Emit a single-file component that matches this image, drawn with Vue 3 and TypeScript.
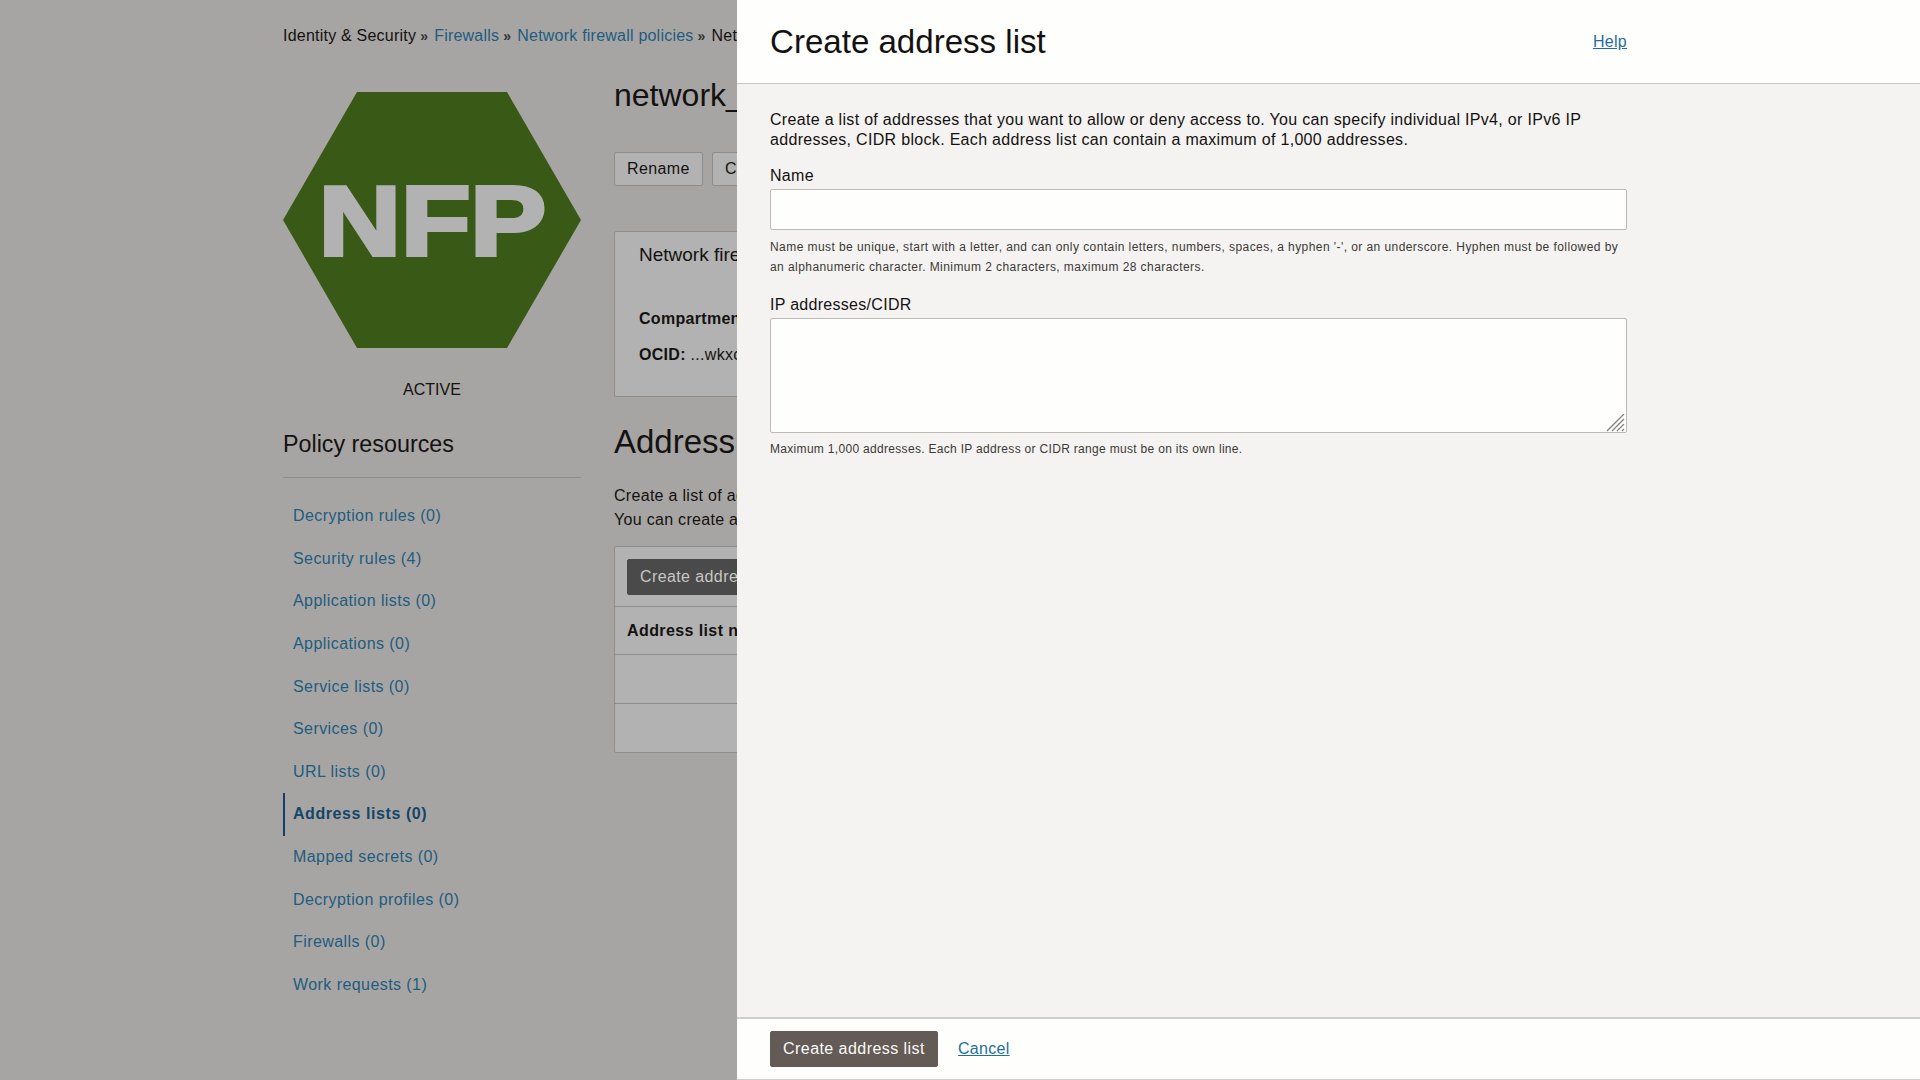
<script setup lang="ts">
const resources: { label: string; active?: boolean }[] = [
  { label: 'Decryption rules (0)' },
  { label: 'Security rules (4)' },
  { label: 'Application lists (0)' },
  { label: 'Applications (0)' },
  { label: 'Service lists (0)' },
  { label: 'Services (0)' },
  { label: 'URL lists (0)' },
  { label: 'Address lists (0)', active: true },
  { label: 'Mapped secrets (0)' },
  { label: 'Decryption profiles (0)' },
  { label: 'Firewalls (0)' },
  { label: 'Work requests (1)' },
]
</script>

<template>
  <div class="page">
    <div class="backdrop">
      <nav class="crumbs">
        <span>Identity &amp; Security</span><i class="sep">»</i>
        <a>Firewalls</a><i class="sep">»</i>
        <a>Network firewall policies</a><i class="sep">»</i>
        <span>Network firewall policy details</span>
      </nav>
      <div class="columns">
        <aside class="side">
          <svg class="hex" width="298" height="256" viewBox="0 0 298 256">
            <polygon points="0,128 74,0 224,0 298,128 224,256 74,256" fill="#395a16" />
            <text transform="translate(149.5 162.5) scale(1.16 1)" text-anchor="middle" class="hex-text">NFP</text>
          </svg>
          <div class="state">ACTIVE</div>
          <h2 class="side-title">Policy resources</h2>
          <ul class="menu">
            <li v-for="r in resources" :key="r.label" :class="{ active: r.active }">{{ r.label }}</li>
          </ul>
        </aside>
        <main class="main">
          <h1 class="name">network_firewall_policy</h1>
          <div class="actions">
            <button class="btn">Rename</button>
            <button class="btn">Change compartment</button>
          </div>
          <section class="info">
            <div class="info-title">Network firewall policy information</div>
            <div class="info-row comp"><b>Compartment:</b> root</div>
            <div class="info-row"><b>OCID:</b> ...wkxc</div>
          </section>
          <h2 class="section">Address lists</h2>
          <p class="section-text">Create a list of addresses that you want to allow or deny access to.<br />You can create address lists for this policy.</p>
          <section class="table">
            <div class="toolbar"><button class="btn dark">Create address list</button></div>
            <div class="thead">Address list name</div>
            <div class="trow"></div>
            <div class="trow last"></div>
          </section>
        </main>
      </div>
    </div>

    <div class="panel">
      <header class="panel-head">
        <h1>Create address list</h1>
        <a class="link">Help</a>
      </header>
      <div class="panel-body">
        <p class="intro">Create a list of addresses that you want to allow or deny access to. You can specify individual IPv4, or IPv6 IP addresses, CIDR block. Each address list can contain a maximum of 1,000 addresses.</p>
        <label class="label">Name</label>
        <input class="field" type="text" />
        <p class="hint two">Name must be unique, start with a letter, and can only contain letters, numbers, spaces, a hyphen '-', or an underscore. Hyphen must be followed by an alphanumeric character. Minimum 2 characters, maximum 28 characters.</p>
        <label class="label second">IP addresses/CIDR</label>
        <div class="area-wrap">
          <textarea class="area"></textarea>
          <svg class="grip" width="18" height="18" viewBox="0 0 18 18">
            <path d="M0 17 17 0M5 17 17 5M10 17 17 10M15 17 17 15" stroke="#85807c" stroke-width="1.3" fill="none" />
          </svg>
        </div>
        <p class="hint">Maximum 1,000 addresses. Each IP address or CIDR range must be on its own line.</p>
      </div>
      <footer class="panel-foot">
        <button class="btn primary">Create address list</button>
        <a class="link cancel">Cancel</a>
      </footer>
    </div>
  </div>
</template>

<style>
html, body { margin: 0; padding: 0; }
</style>

<style scoped>
.page {
  position: relative;
  width: 1920px;
  height: 1080px;
  overflow: hidden;
  background: #a7a5a3;
  font-family: "Liberation Sans", Arial, sans-serif;
  font-size: 16px;
  color: #141210;
}
.backdrop { padding-left: 283px; }
.crumbs {
  height: 71px;
  line-height: 71px;
  width: 454px;
  overflow: hidden;
  white-space: nowrap;
  letter-spacing: 0.22px;
}
.crumbs a { color: #1e5c80; }
.sep { font-style: normal; font-weight: 700; font-size: 14px; margin: 0 6px 0 4px; color: #333; }
.columns { display: flex; gap: 33px; }
.side { width: 298px; flex: none; padding-top: 21px; }
.hex { display: block; }
.hex-text {
  font-size: 98px;
  font-weight: 700;
  fill: #b2b2b2;
  stroke: #b2b2b2;
  stroke-width: 4px;
  stroke-linejoin: miter;
  font-family: "Liberation Sans", Arial, sans-serif;
}
.state { text-align: center; margin-top: 32px; line-height: 20px; }
.side-title {
  margin: 28px 0 0;
  font-size: 23.3px;
  font-weight: 400;
  line-height: 32px;
  padding-bottom: 17px;
  border-bottom: 1px solid #8f8d8b;
}
.menu { list-style: none; margin: 17.2px 0 0; padding: 0; letter-spacing: 0.43px; }
.menu li {
  height: 42.6px;
  line-height: 42.6px;
  padding-left: 10px;
  color: #1e5c80;
}
.menu li.active {
  padding-left: 8px;
  border-left: 2px solid #123f6d;
  font-weight: 700;
  color: #154668;
  letter-spacing: 0.57px;
}
.main { width: 123px; overflow: hidden; white-space: nowrap; }
.name { margin: 0; font-size: 32px; font-weight: 400; line-height: 48px; }
.actions { display: flex; gap: 9px; margin-top: 33px; }
.btn {
  flex: none;
  height: 34px;
  padding: 0 12px;
  border: 1px solid #8f8d8b;
  border-radius: 2px;
  background: #b2b2b2;
  color: #141210;
  font: 16px "Liberation Sans", Arial, sans-serif;
  letter-spacing: 0.4px;
}
.info {
  width: 400px;
  height: 166px;
  margin-top: 45px;
  box-sizing: border-box;
  padding: 12px 24px;
  background: #b2b2b2;
  border: 1px solid #8f8d8b;
  border-radius: 2px;
}
.info-title { font-size: 19px; line-height: 22px; }
.info-row { line-height: 20px; margin-top: 16px; letter-spacing: 0.3px; }
.info-row.comp { margin-top: 43px; }
.section { margin: 25px 0 0; font-size: 33px; font-weight: 400; line-height: 40px; }
.section-text { margin: 22px 0 0; line-height: 24px; letter-spacing: 0.3px; }
.table {
  width: 400px;
  margin-top: 14px;
  background: #b2b2b2;
  border: 1px solid #8f8d8b;
  border-radius: 2px;
}
.toolbar { height: 60px; box-sizing: border-box; padding: 12px; border-bottom: 1px solid #8f8d8b; }
.btn.dark { height: 36px; background: #4a4a4a; border-color: #4a4a4a; color: #c9c6c3; }
.thead { height: 47px; line-height: 47px; padding-left: 12px; font-weight: 700; border-bottom: 1px solid #8f8d8b; letter-spacing: 0.4px; }
.trow { height: 48px; border-bottom: 1px solid #8f8d8b; }
.trow.last { border-bottom: 0; }

.panel {
  position: absolute;
  top: 0;
  right: 0;
  bottom: 0;
  width: 1183px;
  display: flex;
  flex-direction: column;
  background: #f4f3f2;
}
.panel-head {
  height: 83px;
  flex: none;
  padding: 0 293px 0 33px;
  display: flex;
  align-items: center;
  justify-content: space-between;
  background: #fefefd;
  border-bottom: 1px solid #c8c6c3;
}
.panel-head h1 { margin: 0; font-size: 33.1px; font-weight: 400; }
.link { color: #1f6f9c; text-decoration: underline; letter-spacing: 0.3px; }
.panel-body { flex: 1; width: 857px; padding: 26px 293px 0 33px; }
.intro { margin: 0; line-height: 20px; letter-spacing: 0.31px; }
.label { display: block; margin-top: 16px; line-height: 20px; letter-spacing: 0.29px; }
.label.second { margin-top: 18px; }
.field {
  display: block;
  width: 100%;
  height: 41px;
  margin-top: 3px;
  box-sizing: border-box;
  background: #fefefd;
  border: 1px solid #bdb9b4;
  border-radius: 2px;
}
.area-wrap { position: relative; margin-top: 3px; height: 115px; }
.area {
  display: block;
  width: 100%;
  height: 115px;
  box-sizing: border-box;
  resize: none;
  background: #fefefd;
  border: 1px solid #bdb9b4;
  border-radius: 2px;
}
.grip { position: absolute; right: 2px; bottom: 1px; }
.hint { margin: 6px 0 0; font-size: 12px; line-height: 20px; color: #3c3935; letter-spacing: 0.31px; }
.hint.two { margin-top: 7px; letter-spacing: 0.43px; }
.panel-foot {
  flex: none;
  height: 60px;
  display: flex;
  align-items: center;
  gap: 20px;
  padding-left: 33px;
  background: #fefefd;
  border-top: 2px solid #d0ceca;
  border-bottom: 1px solid #d0ceca;
}
.btn.primary { height: 36px; background: #645a56; border-color: #645a56; color: #fbf9f6; letter-spacing: 0.45px; }
</style>
